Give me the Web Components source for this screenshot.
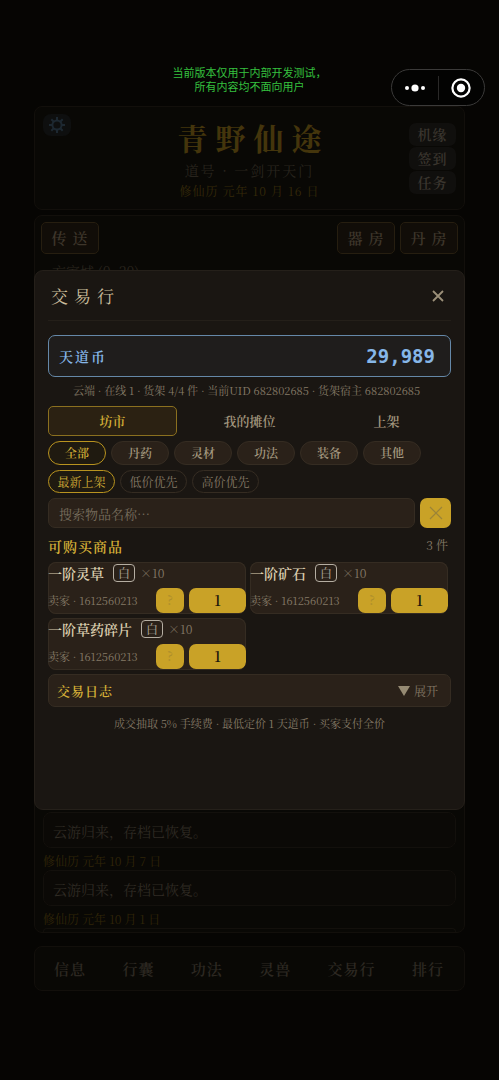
<!DOCTYPE html>
<html lang="zh-CN">
<head>
<meta charset="utf-8">
<meta name="viewport" content="width=device-width, initial-scale=1">
<title>青野仙途</title>
<style>
:root{
  --serif:"Noto Serif CJK SC","Noto Serif SC","Liberation Serif","Noto Sans CJK SC",serif;
  --gold:#d4af37; --gold-fill:#c9a227; --panel:#1a1612; --raised:#2a2119; --line:#352c22; --muted:#857a67; --soft:#a3977e; --ink:#dccfb0;
}
html,body{margin:0;min-height:100%;background:#060503}
body{font-family:var(--serif);color:var(--muted)}
</style>
</head>
<body>
<game-page></game-page>
<trade-dialog></trade-dialog>
<host-capsule></host-capsule>
<script>
const define = (name, html) => customElements.define(name, class extends HTMLElement {
  constructor() {
    super();
    const tpl = document.createElement('template');
    tpl.innerHTML = `<style>*{box-sizing:border-box}button,input{font:inherit;color:inherit;letter-spacing:inherit;margin:0}</style>` + html;
    this.attachShadow({ mode: 'open' }).append(tpl.content.cloneNode(true));
  }
});

define('host-capsule', `
<style>
:host{box-sizing:border-box;position:fixed;top:69px;right:14px;display:flex;align-items:center;width:94px;height:37px;border:1px solid #3b3a39;border-radius:19px;background:#030302}
button{flex:1;height:35px;border:0;background:none;padding:0;display:flex;align-items:center;justify-content:center}
i{width:1px;height:24px;background:#2a2928}
svg{display:block;fill:#fff}
</style>
<button aria-label="更多"><svg width="22" height="10"><circle cx="3" cy="5" r="2"/><circle cx="11" cy="5" r="3.6"/><circle cx="19" cy="5" r="2"/></svg></button>
<i></i>
<button aria-label="关闭小程序"><svg width="20" height="20"><circle cx="10" cy="10" r="8.6" fill="none" stroke="#fff" stroke-width="2.2"/><circle cx="10" cy="10" r="4.2"/></svg></button>`);

define('hero-card', `
<style>
:host{box-sizing:border-box;display:grid;grid-template-columns:56px 1fr 56px;height:104px;padding:7px 8px;border:1px solid #120f0b;border-radius:8px;background:#090805}
.gear{width:28px;height:22px;padding:0;border:0;border-radius:8px;background:#0e0f0f;display:flex;align-items:center;justify-content:center}
.mid{text-align:center;white-space:nowrap}
h1{margin:3px 0 0;font-size:30px;line-height:40px;letter-spacing:8px;text-indent:8px;color:#44350c;font-weight:700}
p{margin:0}
.name{font-size:14px;line-height:26px;letter-spacing:2px;color:#28241d}
.date{font-size:12px;line-height:16px;letter-spacing:1px;color:#352909}
.side{display:flex;flex-direction:column;gap:1px;align-items:flex-end;padding-top:9px}
.side button{width:47px;height:23px;padding:0 0 2px;border:0;border-radius:7px;background:#100f0d;color:#3b362f;font-size:14px;font-weight:600;letter-spacing:1px;line-height:20px}
</style>
<button class="gear" aria-label="设置"><svg width="18" height="18" viewBox="0 0 18 18" fill="none" stroke="#1d2831"><circle cx="9" cy="9" r="4.6" stroke-width="2"/><path stroke-width="2" d="M9 1v3M9 14v3M1 9h3M14 9h3M3.3 3.3l2.2 2.2M12.5 12.5l2.2 2.2M3.3 14.7l2.2-2.2M12.5 5.500l2.200-2.200"/></svg></button>
<div class="mid"><h1>青野仙途</h1><p class="name">道号 · 一剑开天门</p><p class="date">修仙历 元年 10 月 16 日</p></div>
<div class="side"><button>机缘</button><button>签到</button><button>任务</button></div>`);

define('log-entry', `
<style>
:host{display:block}
.msg{height:36px;padding:0 9px;border:1px solid #13100c;border-radius:8px;background:#0b0906;font-size:14px;line-height:36px;color:#302b24}
.date{padding-top:4px;font-size:12px;line-height:18px;color:#302508}
</style>
<div class="msg"><slot></slot></div><div class="date"><slot name="date"></slot></div>`);

define('world-card', `
<style>
:host{box-sizing:border-box;display:flex;flex-direction:column;height:718px;padding:6px 8px 0 6px;border:1px solid #120f0b;border-radius:8px;background:#090805;overflow:hidden}
.bar{display:flex;gap:5px;margin-right:-2px}
.bar button{width:58px;height:32px;padding:0 0 2px;border:1px solid #261e10;border-radius:5px;background:#110d08;color:#3e362b;font-size:15px;font-weight:600;letter-spacing:1px;white-space:pre}
.bar button:first-child{margin-right:auto}
.place{margin:6px 0 0;padding-left:11px;font-size:14px;line-height:22px;color:#2a251e}
.logs{margin-top:auto;display:flex;flex-direction:column;padding-left:2px}
.edge{height:4px;border:1px solid #13100c;border-bottom:0;border-radius:8px 8px 0 0}
</style>
<div class="bar"><button>传 送</button><button>器 房</button><button>丹 房</button></div>
<p class="place">方家城 (0, 20)</p>
<div class="logs"><log-entry>云游归来，存档已恢复。<span slot="date">修仙历 元年 10 月 7 日</span></log-entry><log-entry>云游归来，存档已恢复。<span slot="date">修仙历 元年 10 月 1 日</span></log-entry><div class="edge"></div></div>`);

define('bottom-nav', `
<style>
:host{box-sizing:border-box;display:flex;justify-content:space-between;align-items:center;height:45px;padding:0 20px 0 19px;border:1px solid #120f0b;border-radius:8px;background:#090805}
a{color:#2d2822;text-decoration:none;font-size:15px;font-weight:600;line-height:24px;letter-spacing:1px}
</style>
<a href="#info">信息</a><a href="#bag">行囊</a><a href="#skill">功法</a><a href="#beast">灵兽</a><a href="#trade">交易行</a><a href="#rank">排行</a>`);

define('game-page', `
<style>
:host{display:block;padding:65px 34px 90px}
.notice{margin:0 0 13px;text-align:center;font:11px/14px "Noto Sans CJK SC",sans-serif;color:#35c13f}
hero-card{margin-bottom:5px}
world-card{margin-bottom:13px}
</style>
<p class="notice">当前版本仅用于内部开发测试，<br>所有内容均不面向用户</p>
<hero-card></hero-card><world-card></world-card><bottom-nav></bottom-nav>`);

define('pill-button', `
<style>
:host{display:block}
button{display:block;width:100%;height:100%;padding:0;border:1px solid var(--line);border-radius:12px;background:var(--raised);color:var(--soft);font-size:12px;line-height:16px;font-weight:600}
:host([thin]) button{background:none;color:var(--muted);font-weight:400}
:host([active]) button{border-color:#b8931f;background:#1f1a10;color:var(--gold)}
</style>
<button><slot></slot></button>`);

define('item-card', `
<style>
:host{display:block;height:52px;border-radius:8px;background:var(--raised);box-shadow:inset 0 0 0 1px var(--line);overflow:hidden;white-space:nowrap}
.top{display:flex;align-items:center;height:22px}
b{font-size:14px;line-height:20px;color:var(--ink);font-weight:600;margin-right:9px}
.grade{width:22px;height:18px;border:1px solid #b5aea2;border-radius:4px;text-align:center;font-size:12px;line-height:16px;color:#b5aea2;margin-right:5px}
.qty{font-size:12px;line-height:20px}
.bottom{display:flex;align-items:center;height:30px;gap:5px;padding-top:2px}
.seller{flex:1;font-size:11px;line-height:16px}
button{height:25px;padding:0;border:0;border-radius:7px;background:var(--gold-fill);font-size:14px;line-height:20px;color:#1c160c;font-weight:600}
.ask{width:28px;font-size:13px;color:#ae8e2c}
.buy{width:57px}
</style>
<div class="top"><b><slot></slot></b><span class="grade">白</span><span class="qty">×10</span></div>
<div class="bottom"><span class="seller">卖家 · 1612560213</span><button class="ask" aria-label="物品说明">?</button><button class="buy">1</button></div>`);

define('trade-dialog', `
<style>
:host{position:fixed;inset:0;display:flex;align-items:center;justify-content:center;padding:0 34px;pointer-events:none}
section{pointer-events:auto;width:100%;min-height:50vh;padding:0 13px 14px;border:1px solid #25201a;border-radius:9px;background:var(--panel)}
header{display:flex;justify-content:space-between;align-items:center;height:50px;border-bottom:1px solid #241f19;padding:0 4px 0 3px}
h2{margin:0;font-size:17px;line-height:24px;font-weight:400;letter-spacing:6px;color:#c9bc9c}
.x{width:18px;height:28px;padding:0;border:0;background:none;display:flex;align-items:center;justify-content:center}
.coin{display:flex;justify-content:space-between;align-items:center;height:42px;margin-top:14px;padding:0 15px 0 10px;border:1px solid #6588a8;border-radius:7px;background:#1f1d1c;color:#86b6e8;font-size:14px;font-weight:600;letter-spacing:2px}
.coin output{font:bold 19px/24px "DejaVu Sans Mono",monospace;letter-spacing:0}
.status,.fee{margin:0;text-align:center;font-size:11px;line-height:16px;white-space:nowrap}
.status{margin:5px 0 8px;padding-right:6px}
.tabs{display:grid;grid-template-columns:repeat(3,1fr);gap:8px}
.tabs button{height:30px;padding:0;border:1px solid transparent;border-radius:5px;background:none;color:var(--soft);font-size:13px;font-weight:600;line-height:20px}
.tabs [aria-selected=true]{border-color:#8b701f;background:#2b2112;color:var(--gold)}
.cats,.sorts{display:flex;gap:5px;margin-top:5px}
.cats pill-button{width:58px;height:24px}
.sorts{gap:5px}
.sorts pill-button{width:67px;height:23px}
form{display:flex;gap:5px;margin-top:5px}
input{flex:1;min-width:0;height:30px;padding:0 10px;border:1px solid var(--line);border-radius:7px;background:var(--raised);font-size:13px;outline:0}
input::placeholder{color:#786e5e;opacity:1}
form button{width:31px;height:30px;padding:0;border:0;border-radius:7px;background:var(--gold-fill);display:flex;align-items:center;justify-content:center}
.head{display:flex;justify-content:space-between;align-items:center;height:34px;padding-right:3px}
h3{margin:0;padding-top:2px;font-size:14px;line-height:20px;letter-spacing:1px;font-weight:600;color:var(--gold)}
.head span{font-size:12px;line-height:20px}
.items{display:grid;grid-template-columns:1fr 1fr;gap:4px;padding-right:3px}
.log{display:flex;justify-content:space-between;align-items:center;width:100%;height:33px;margin-top:4px;padding:0 12px 0 8px;border:1px solid var(--line);border-radius:7px;background:var(--raised)}
.log b{font-size:13px;line-height:20px;letter-spacing:1px;font-weight:600;color:var(--gold)}
.log span{display:flex;align-items:center;gap:4px;font-size:12px}
.fee{margin-top:8px}
svg{display:block}
</style>
<section role="dialog" aria-labelledby="t">
<header><h2 id="t">交易行</h2><button class="x" aria-label="关闭"><svg width="12" height="12" stroke="#9c9079" stroke-width="1.8"><path d="M1 1 11 11M11 1 1 11"/></svg></button></header>
<div class="coin"><span>天道币</span><output>29,989</output></div>
<p class="status">云端 · 在线 1 · 货架 4/4 件 · 当前UID 682802685 · 货架宿主 682802685</p>
<div class="tabs" role="tablist"><button role="tab" aria-selected="true">坊市</button><button role="tab" aria-selected="false">我的摊位</button><button role="tab" aria-selected="false">上架</button></div>
<div class="cats"><pill-button active>全部</pill-button><pill-button>丹药</pill-button><pill-button>灵材</pill-button><pill-button>功法</pill-button><pill-button>装备</pill-button><pill-button>其他</pill-button></div>
<div class="sorts"><pill-button thin active>最新上架</pill-button><pill-button thin>低价优先</pill-button><pill-button thin>高价优先</pill-button></div>
<form><input type="text" aria-label="搜索物品名称" placeholder="搜索物品名称…"><button type="button" aria-label="清除"><svg width="14" height="14" stroke="#9b8438" stroke-width="1.2"><path d="M1 1 13 13M13 1 1 13"/></svg></button></form>
<div class="head"><h3>可购买商品</h3><span>3 件</span></div>
<div class="items"><item-card>一阶灵草</item-card><item-card>一阶矿石</item-card><item-card>一阶草药碎片</item-card></div>
<button class="log"><b>交易日志</b><span><svg width="12" height="10" fill="#958a73"><path d="M0 0H12L6 10Z"/></svg>展开</span></button>
<p class="fee">成交抽取 5% 手续费 · 最低定价 1 天道币 · 买家支付全价</p>
</section>`);
</script>
</body>
</html>
